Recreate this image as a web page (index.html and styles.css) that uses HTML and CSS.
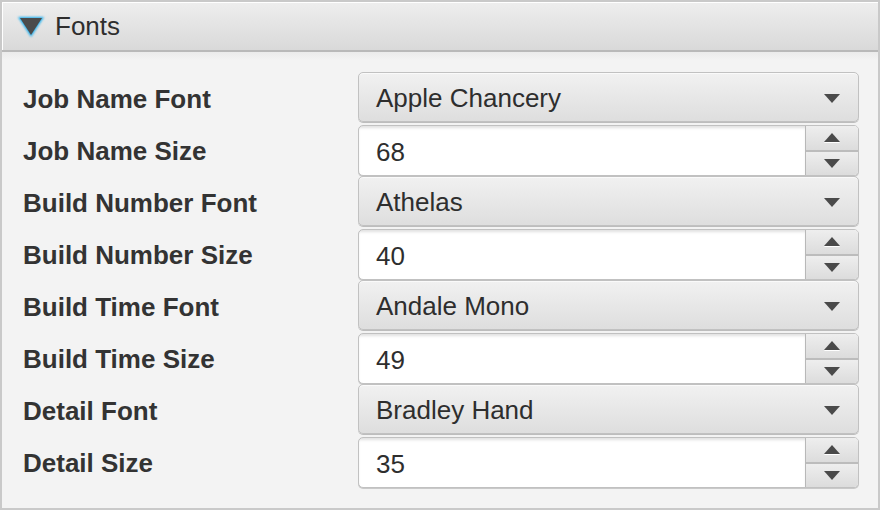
FILE: index.html
```html
<!DOCTYPE html>
<html>
<head>
<meta charset="utf-8">
<link rel="stylesheet" href="styles.css">
</head>
<body>
<div class="panel">
  <div class="panel-header">
    <svg class="disclosure" width="30" height="26" viewBox="0 0 30 26">
      <defs>
        <filter id="glow" x="-40%" y="-40%" width="180%" height="180%">
          <feGaussianBlur stdDeviation="1.3"/>
        </filter>
      </defs>
      <polygon points="2,3 28,3 15,23" fill="#1eaef0" filter="url(#glow)"/>
      <polygon points="4,4 26,4 15,21" fill="#4b4b4b"/>
    </svg>
    <span class="panel-title">Fonts</span>
  </div>
  <div class="panel-body">
    <div class="label">Job Name Font</div>
    <div class="combo"><span class="combo-value">Apple Chancery</span><span class="arrow-down"></span></div>

    <div class="label">Job Name Size</div>
    <div class="spinner"><div class="spin-field">68</div><div class="spin-buttons"><div class="spin-btn"><span class="arrow-up"></span></div><div class="spin-btn"><span class="arrow-down"></span></div></div></div>

    <div class="label">Build Number Font</div>
    <div class="combo"><span class="combo-value">Athelas</span><span class="arrow-down"></span></div>

    <div class="label">Build Number Size</div>
    <div class="spinner"><div class="spin-field">40</div><div class="spin-buttons"><div class="spin-btn"><span class="arrow-up"></span></div><div class="spin-btn"><span class="arrow-down"></span></div></div></div>

    <div class="label">Build Time Font</div>
    <div class="combo"><span class="combo-value">Andale Mono</span><span class="arrow-down"></span></div>

    <div class="label">Build Time Size</div>
    <div class="spinner"><div class="spin-field">49</div><div class="spin-buttons"><div class="spin-btn"><span class="arrow-up"></span></div><div class="spin-btn"><span class="arrow-down"></span></div></div></div>

    <div class="label">Detail Font</div>
    <div class="combo"><span class="combo-value">Bradley Hand</span><span class="arrow-down"></span></div>

    <div class="label">Detail Size</div>
    <div class="spinner"><div class="spin-field">35</div><div class="spin-buttons"><div class="spin-btn"><span class="arrow-up"></span></div><div class="spin-btn"><span class="arrow-down"></span></div></div></div>
  </div>
</div>
</body>
</html>
```

FILE: styles.css
```css
html, body {
  margin: 0;
  padding: 0;
  background: #f3f3f3;
}

body {
  font-family: "Liberation Sans", Arial, sans-serif;
  color: #333333;
}

.panel {
  width: 880px;
  height: 510px;
  box-sizing: border-box;
  border: 2px solid #c9c9c9;
  background: #f3f3f3;
  display: flex;
  flex-direction: column;
}

.panel-header {
  box-sizing: border-box;
  height: 50px;
  border-bottom: 2px solid #b9b9b9;
  background: linear-gradient(#eeeeee, #d9d9d9);
  box-shadow: inset 1px 1px 0 #ffffff;
  display: flex;
  align-items: center;
  padding-left: 14px;
}

.disclosure {
  display: block;
  margin-right: 9px;
  margin-top: 2px;
}

.panel-title {
  font-size: 26px;
  color: #2e2e2e;
  margin-top: 1px;
}

.panel-body {
  flex: 1;
  display: grid;
  grid-template-columns: 335px 501px;
  grid-auto-rows: 50px;
  row-gap: 2px;
  padding: 20px 0 0 21px;
  background: linear-gradient(#ebebeb, #f3f3f3 8px);
}

.label {
  font-weight: bold;
  font-size: 26px;
  color: #333333;
  display: flex;
  align-items: center;
  padding-top: 4px;
}

.combo {
  box-sizing: border-box;
  border: 1px solid #c1c1c1;
  border-radius: 5px;
  background: linear-gradient(#f1f1f1, #dedede);
  box-shadow: 0 1px 0 #bdbdbd, inset 0 1px 0 #fafafa;
  display: flex;
  align-items: center;
  padding: 3px 18px 0 17px;
  height: 50px;
}

.combo-value {
  flex: 1;
  font-size: 26px;
  color: #2e2e2e;
}

.arrow-down {
  width: 0;
  height: 0;
  border-left: 8px solid transparent;
  border-right: 8px solid transparent;
  border-top: 9px solid #4a4a4a;
  display: block;
}

.arrow-up {
  width: 0;
  height: 0;
  border-left: 8px solid transparent;
  border-right: 8px solid transparent;
  border-bottom: 9px solid #4a4a4a;
  display: block;
  filter: drop-shadow(0 1px 0 #ffffff);
}

.spinner {
  box-sizing: border-box;
  display: flex;
  border: 1px solid #c1c1c1;
  border-radius: 5px;
  background: #ffffff;
  box-shadow: 0 1px 0 #c9c9c9;
  height: 51px;
  margin-top: 1px;
  overflow: hidden;
}

.spin-field {
  flex: 1;
  font-size: 26px;
  color: #2e2e2e;
  display: flex;
  align-items: center;
  padding: 4px 0 0 17px;
  box-shadow: inset 0 3px 3px -1px rgba(0, 0, 0, 0.12);
}

.spin-buttons {
  width: 52px;
  display: flex;
  flex-direction: column;
  border-left: 1px solid #b8b8b8;
}

.spin-btn {
  flex: 1;
  display: flex;
  align-items: center;
  justify-content: center;
  background: linear-gradient(#eeeeee, #dcdcdc);
}

.spin-btn + .spin-btn {
  border-top: 2px solid #bcbcbc;
}
```
